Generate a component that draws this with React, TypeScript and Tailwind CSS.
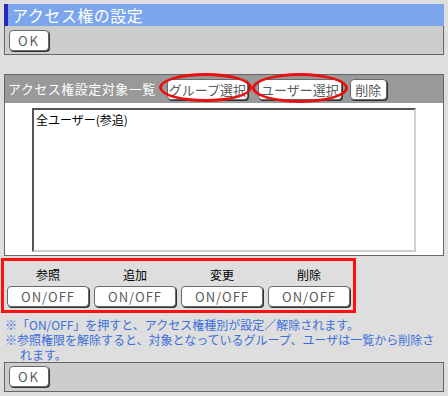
const font = { fontFamily: '"Noto Sans CJK JP", "Noto Sans", sans-serif' };

function Btn({ label, className = "" }: { label: string; className?: string }) {
  return (
    <button
      className={`h-[21px] bg-white border border-[#6a6a6a] rounded-[4px] shadow-[1px_1px_0_#333] text-[13px] leading-none text-[#5a5a5a] flex items-center justify-center ${className}`}
    >
      {label}
    </button>
  );
}

const perms = ["参照", "追加", "変更", "削除"];

export default function App() {
  return (
    <div className="relative w-[448px] h-[396px] bg-[#dedede] px-1 pt-1 overflow-hidden" style={font}>
      {/* Title */}
      <div className="h-[22px] bg-[#7ba6ee] border-l-[4px] border-[#2a2ab8] text-white text-[16px] leading-[22px] pl-[4px] tracking-[0.5px]">
        アクセス権の設定
      </div>
      <div className="h-[29px] bg-[#cccccc] border border-t-0 border-[#666] pl-[4px] pt-[4px]">
        <Btn label="OK" className="w-[40px] tracking-[2px]" />
      </div>

      {/* Target list */}
      <div className="mt-[19px] border border-[#666] bg-white">
        <div className="h-[28px] bg-[#999999] flex items-center pl-[3px]">
          <span className="text-white text-[13px] tracking-[0.5px] mr-[11px]">アクセス権設定対象一覧</span>
          <Btn label="グループ選択" className="w-[81px] mr-[10px]" />
          <Btn label="ユーザー選択" className="w-[84px] mr-[8px]" />
          <Btn label="削除" className="w-[37px]" />
        </div>
        <div className="h-[152px] pt-[5px] pl-[27px]">
          <div className="w-[384px] h-[144px] border-2 border-t-[#555] border-l-[#555] border-b-[#cfcfcf] border-r-[#cfcfcf] text-[12px] text-black pl-[2px] pt-[1px]">
            全ユーザー(参追)
          </div>
        </div>
      </div>

      {/* Permissions */}
      <div className="flex gap-[5px] pl-[3px] pt-[11px] w-[355px]">
        {perms.map((p) => (
          <div key={p} className="flex flex-col items-center w-[82px]">
            <span className="text-[12px] text-black leading-[16px]">{p}</span>
            <Btn label="ON/OFF" className="w-[82px] mt-[3px] tracking-[1px]" />
          </div>
        ))}
      </div>

      {/* Notes */}
      <div className="mt-[10px] h-[45px] text-[12px] leading-[15px] text-[#3b6edc] pl-[1px]">
        <p>※「ON/OFF」を押すと、アクセス権種別が設定／解除されます。</p>
        <p className="pl-[15px] -indent-[15px]">
          ※参照権限を解除すると、対象となっているグループ、ユーザは一覧から削除されます。
        </p>
      </div>
      <div className="h-[30px] bg-[#cccccc] border border-[#666] pl-[4px] pt-[3px]">
        <Btn label="OK" className="w-[40px] tracking-[2px]" />
      </div>

      {/* Red annotations */}
      <div className="absolute left-[1px] top-[258px] w-[355px] h-[55px] border-[3px] border-[#ff1010] pointer-events-none" />
      <div className="absolute left-[159px] top-[73px] w-[93px] h-[29px] border-[3px] border-[#e81010] rounded-[50%] pointer-events-none" />
      <div className="absolute left-[252px] top-[73px] w-[96px] h-[30px] border-[3px] border-[#e81010] rounded-[50%] pointer-events-none" />
    </div>
  );
}
